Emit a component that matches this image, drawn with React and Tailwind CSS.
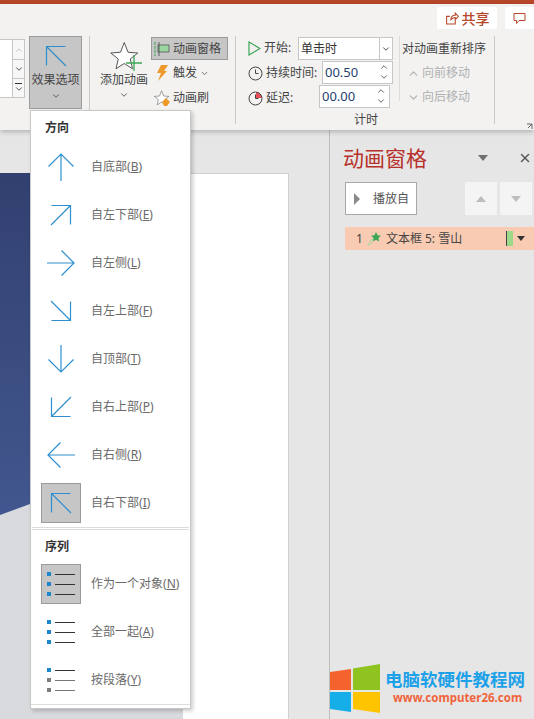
import { ChevronDown, ChevronUp, X } from "lucide-react";

const font = { fontFamily: '"Noto Sans", "Noto Sans CJK SC", sans-serif' };

const directions = [
  { angle: 0, label: "自底部", key: "B" },
  { angle: 45, label: "自左下部", key: "E" },
  { angle: 90, label: "自左侧", key: "L" },
  { angle: 135, label: "自左上部", key: "F" },
  { angle: 180, label: "自顶部", key: "T" },
  { angle: 225, label: "自右上部", key: "P" },
  { angle: 270, label: "自右侧", key: "R" },
  { angle: 315, label: "自右下部", key: "I", active: true },
];

const sequences = [
  { label: "作为一个对象", key: "N", colors: ["#1f87c9", "#1f87c9", "#1f87c9"], active: true },
  { label: "全部一起", key: "A", colors: ["#1f87c9", "#1f87c9", "#1f87c9"] },
  { label: "按段落", key: "Y", colors: ["#1f87c9", "#7d7d7d", "#7d7d7d"] },
];

// straight arrows point up, diagonal ones get corner-shaped heads
const DirArrow = ({ angle }) => {
  if (angle % 90 === 0) {
    return (
      <svg width="32" height="32" viewBox="0 0 32 32" fill="none" stroke="#2e8fd0" strokeWidth="1.2" style={{ transform: `rotate(${angle}deg)` }}>
        <path d="M16 30V3M3.500 15.500L16 3l12.500 12.500" />
      </svg>
    );
  }
  return (
    <svg width="24" height="24" viewBox="0 0 24 24" fill="none" stroke="#2e8fd0" strokeWidth="1.2" style={{ transform: `rotate(${angle - 45}deg)` }}>
      <path d="M2 22L21.500 2.500M2.500 2.500h19v19" />
    </svg>
  );
};

const ListIcon = ({ colors }) => (
  <div className="flex flex-col gap-[6px]">
    {colors.map((c, i) => (
      <div key={i} className="flex items-center gap-[4px]">
        <svg width="4" height="4"><rect width="4" height="4" fill={c} /></svg>
        <div className={i > 0 && c !== "#1f87c9" ? "w-5 h-px bg-[#777]" : "w-5 h-px bg-[#333]"} />
      </div>
    ))}
  </div>
);

const MenuRow = ({ active, label, k, children }) => (
  <div className="flex items-center h-12 pl-[10px]">
    <div className={active ? "w-10 h-10 flex items-center justify-center bg-[#c6c6c6] border border-[#9a9a9a]" : "w-10 h-10 flex items-center justify-center"}>
      {children}
    </div>
    <span className="ml-[10px] text-[12px] text-[#6a6a6a] whitespace-nowrap">
      {label}(<span className="underline">{k}</span>)
    </span>
  </div>
);

const Star = ({ size = 40 }) => (
  <svg width={size} height={size} viewBox="0 0 40 40" fill="none" stroke="#444" strokeWidth="1.200">
    <path d="M19 2l5 13 13 1-10 8 3 13-11-7-11 7 3-13L1 16l13-1z" fill="#fff" />
  </svg>
);

const Spin = () => (
  <div className="flex flex-col items-center -mt-px">
    <ChevronUp size={10} className="text-[#444]" />
    <ChevronDown size={10} className="text-[#444]" />
  </div>
);

const Sep = ({ className }) => <div className={"w-px bg-[#c9c9c9] " + className} />;

export default function App() {
  return (
    <div className="relative w-[534px] h-[719px] overflow-hidden bg-[#e6e6e6] flex flex-col" style={font}>
      <div className="h-1 bg-[#b7472a] shrink-0" />

      {/* ribbon */}
      <div className="relative z-10 h-[126px] shrink-0 bg-[#f3f2f1] shadow-[0_2px_5px_rgba(0,0,0,0.22)]">
        <div className="flex justify-end gap-2 h-[32px] pt-[3px]">
          <div className="w-[60px] h-[22px] bg-white flex items-center justify-center gap-[3px] rounded-[2px] text-[14px] font-medium text-[#b7472a]">
            <svg width="14" height="14" viewBox="0 0 12 13" fill="none" stroke="#b7472a" strokeWidth="1">
              <path d="M9 8v4H1V5h3M5 8c0-3 2-4 4-4V2l3 3-3 3V6C7 6 6 7 5 8z" />
            </svg>
            共享
          </div>
          <div className="w-[29px] h-[22px] bg-white flex items-center pl-2 rounded-l-[2px]">
            <svg width="13" height="13" viewBox="0 0 13 13" fill="none" stroke="#b7472a" strokeWidth="1">
              <path d="M1 1.500h11v7H6l-2.500 3v-3H1z" />
            </svg>
          </div>
        </div>

        <div className="flex h-[90px] text-[12px] text-[#444]">
          {/* gallery */}
          <div className="flex w-[25px] h-[59px] mt-[3px] border-y border-[#c6c6c6]">
            <div className="w-3 bg-white" />
            <div className="w-[13px] flex flex-col bg-[#f7f7f7] border-x border-[#c6c6c6]">
              <div className="h-5 flex items-center justify-center border-b border-[#c6c6c6]">
                <ChevronUp size={10} className="text-[#bbb]" />
              </div>
              <div className="h-[19px] flex items-center justify-center border-b border-[#c6c6c6]">
                <ChevronDown size={10} className="text-[#333]" />
              </div>
              <div className="flex-1 flex flex-col items-center justify-center">
                <div className="w-[7px] h-px bg-[#333]" />
                <ChevronDown size={10} className="text-[#333]" />
              </div>
            </div>
          </div>

          {/* effect options */}
          <div className="ml-1 w-[53px] h-[73px] bg-[#c6c6c6] border border-[#9a9a9a] flex flex-col items-center pt-[7px]">
            <DirArrow angle={315} />
            <span className="text-[12px] leading-[16px] mt-[4px] whitespace-nowrap">效果选项</span>
            <ChevronDown size={10} className="mt-[3px] text-[#444]" />
          </div>

          <Sep className="ml-[7px] h-[88px]" />

          {/* add animation */}
          <div className="ml-[9px] w-[50px] flex flex-col items-center pt-[5px]">
            <div className="relative h-[31px] w-[40px] pl-[6px]">
              <Star size={30} />
              <svg className="absolute right-[2px] top-[14px]" width="16" height="16" viewBox="0 0 16 16" stroke="#3aa655" strokeWidth="1.300">
                <path d="M8 0v16M0 8h16" />
              </svg>
            </div>
            <span className="mt-0 whitespace-nowrap leading-[16px]">添加动画</span>
            <ChevronDown size={10} className="mt-[2px] text-[#444]" />
          </div>

          {/* pane, trigger, painter */}
          <div className="ml-[2px] w-[77px] flex flex-col gap-[2px] pt-[1px]">
            <div className="h-[23px] bg-[#c6c6c6] border border-[#9a9a9a] flex items-center pl-[2px] gap-[3px]">
              <svg width="16" height="14" viewBox="0 0 16 14" fill="none">
                <rect x="4" y="3" width="11" height="7" fill="#9ad8a0" stroke="#555" strokeWidth="0.800" />
                <path d="M1 0v14" stroke="#3aa655" strokeDasharray="3 1" />
                <path d="M5 0v14" stroke="#444" strokeWidth="0.800" />
              </svg>
              <span className="whitespace-nowrap">动画窗格</span>
            </div>
            <div className="h-[22px] flex items-center pl-[5px] gap-[3px]">
              <svg width="12" height="16" viewBox="0 0 12 16" fill="#ed9a2d">
                <path d="M5 0h7L8 6h3L2 16l3-8H1z" />
              </svg>
              <span className="whitespace-nowrap ml-[2px]">触发</span>
              <ChevronDown size={9} className="text-[#444]" />
            </div>
            <div className="h-[23px] flex items-center pl-[3px] gap-[3px]">
              <div className="relative">
                <Star size={16} />
                <svg className="absolute right-0 bottom-0" width="8" height="8"><path d="M0 4L4 0l4 4-3 4H2z" fill="#ed9a2d" /></svg>
              </div>
              <span className="whitespace-nowrap">动画刷</span>
            </div>
          </div>

          <Sep className="ml-[7px] h-[88px]" />

          {/* timing */}
          <div className="ml-[12px] w-[145px] flex flex-col">
            <div className="flex items-start">
              <div className="flex flex-col gap-[1px] w-[74px]">
                <div className="h-6 flex items-center gap-[3px] whitespace-nowrap">
                  <svg width="13" height="15" viewBox="0 0 13 15" fill="none" stroke="#3aa655" strokeWidth="1.200"><path d="M1 1l11 6.500L1 14z" /></svg>
                  开始:
                </div>
                <div className="h-6 flex items-center gap-[3px] whitespace-nowrap">
                  <svg width="15" height="15" viewBox="0 0 15 15" fill="none" stroke="#444"><circle cx="7.500" cy="7.500" r="6.500" /><path d="M7.500 3.500v4h3" /></svg>
                  持续时间:
                </div>
                <div className="h-6 flex items-center gap-[3px] whitespace-nowrap">
                  <svg width="15" height="15" viewBox="0 0 15 15" fill="none" stroke="#444"><path d="M8 1a6.500 6.500 0 0 1 6 6H8z" fill="#e8505a" stroke="none" /><circle cx="7.500" cy="7.500" r="6.500" /><path d="M7.500 3.500v4h3" /></svg>
                  延迟:
                </div>
              </div>
              <div className="flex flex-col gap-px -ml-[25px] items-end w-[96px] pt-[1px]">
                <div className="w-[95px] h-[23px] bg-white border border-[#c6c6c6] flex items-center justify-between pl-[2px] text-[#333]">
                  单击时
                  <div className="w-[13px] h-full border-l border-[#c6c6c6] flex items-center justify-center">
                    <ChevronDown size={10} className="text-[#333]" />
                  </div>
                </div>
                <div className="w-[71px] h-[23px] bg-white border border-[#c6c6c6] flex items-center justify-between pl-[2px] pr-[3px] text-[13px] text-[#1f3f6f]">
                  00.50
                  <Spin />
                </div>
                <div className="w-[71px] h-[23px] bg-white border border-[#c6c6c6] flex items-center justify-between pl-[2px] pr-[3px] text-[13px] text-[#1f3f6f] mr-[3px]">
                  00.00
                  <Spin />
                </div>
              </div>
            </div>
            <div className="text-center pl-[91px] mt-[2px] leading-[16px]">计时</div>
          </div>

          <Sep className="ml-[6px] h-[65px] bg-[#dcdcdc]" />

          {/* reorder */}
          <div className="ml-[2px] w-[85px] flex flex-col pt-[1px]">
            <div className="h-6 flex items-center whitespace-nowrap">对动画重新排序</div>
            <div className="h-6 flex items-center gap-[2px] pl-[5px] text-[#b0b0b0] whitespace-nowrap">
              <ChevronUp size={13} />向前移动
            </div>
            <div className="h-6 flex items-center gap-[2px] pl-[5px] text-[#b0b0b0] whitespace-nowrap">
              <ChevronDown size={13} />向后移动
            </div>
          </div>

          <Sep className="ml-[7px] h-[88px]" />
        </div>
        <svg className="absolute right-[1px] bottom-[1px]" width="6" height="6" fill="none" stroke="#666"><path d="M0 1h5v5M5 1L1 5" /></svg>
      </div>

      {/* work area */}
      <div className="flex-1 flex min-h-0">
        <div className="w-[329px] shrink-0 pt-[43px] border-r-0">
          <div className="flex h-full w-[289px]">
            <div className="w-[183px] h-full relative bg-[linear-gradient(180deg,#31406f_0%,#3f5288_50%,#4a66a6_100%)]">
              <svg className="absolute inset-0" width="183" height="546" viewBox="0 0 183 546">
                <path d="M0 342L60 320L183 290V546H0z" fill="#d9dadd" />
              </svg>
            </div>
            <div className="flex-1 bg-white border-t border-r border-[#d0d0d0]" />
          </div>
        </div>

        {/* animation pane */}
        <div className="flex-1 border-l border-[#bdbdbd] pl-[15px] pt-[13px]">
          <div className="flex items-center h-[30px] -ml-[2px]">
            <span className="text-[21px] leading-[30px] text-[#b7312a] whitespace-nowrap">动画窗格</span>
            <svg className="ml-[51px]" width="10" height="6"><path d="M0 0h10L5 6z" fill="#707070" /></svg>
            <X size={14} strokeWidth={2.400} className="ml-[30px] text-[#555]" />
          </div>
          <div className="flex mt-[9px] h-[33px]">
            <div className="w-[72px] bg-white border border-[#a8a8a8] flex items-center pl-2 text-[12px] text-[#555]">
              <svg width="6" height="12"><path d="M0 0l6 6-6 6z" fill="#8a8a8a" /></svg>
              <span className="ml-[13px]">播放自</span>
            </div>
            <div className="ml-[48px] w-8 bg-[#f4f4f4] flex items-center justify-center">
              <svg width="10" height="6"><path d="M5 0l5 6H0z" fill="#bdbdbd" /></svg>
            </div>
            <div className="ml-[3px] w-8 bg-[#f4f4f4] flex items-center justify-center">
              <svg width="10" height="6"><path d="M0 0h10L5 6z" fill="#bdbdbd" /></svg>
            </div>
          </div>
          <div className="flex items-center mt-[12px] h-[23px] bg-[#f8cbb2] text-[12px] text-[#444] pl-[11px]">
            <span>1</span>
            <svg className="ml-[4px]" width="14" height="14" viewBox="0 0 14 14">
              <path d="M9 0l1.500 3.300 3.500.4-2.600 2.400.7 3.500L9 7.800 5.900 9.600l.7-3.500L4 3.700l3.500-.4z" fill="#3aa655" />
              <path d="M3 9l3-2M1 13l4-3" stroke="#a8d8a8" strokeWidth="1.500" />
            </svg>
            <span className="ml-[5px] whitespace-nowrap">文本框 5: 雪山</span>
            <div className="ml-[44px] w-[7px] h-[15px] bg-[#9ed98a] border-l border-[#444]" />
            <svg className="ml-[4px]" width="8" height="5"><path d="M0 0h8L4 5z" fill="#333" /></svg>
          </div>
        </div>
      </div>

      {/* effect options dropdown */}
      <div className="absolute z-20 left-[30px] top-[110px] w-[161px] h-[599px] bg-white border border-[#c8c8c8] shadow-[2px_2px_4px_rgba(0,0,0,0.2)]">
        <div className="h-[32px] flex items-center pl-[14px] pt-[2px] text-[12px] font-bold text-[#333]">方向</div>
        {directions.map((d) => (
          <MenuRow key={d.key} active={d.active} label={d.label} k={d.key}>
            <DirArrow angle={d.angle} />
          </MenuRow>
        ))}
        <div className="mx-[1px] h-[3px] border-y border-[#dcdcdc]" />
        <div className="h-[30px] flex items-center pl-[14px] pt-[3px] text-[12px] font-bold text-[#333]">序列</div>
        {sequences.map((s) => (
          <MenuRow key={s.key} active={s.active} label={s.label} k={s.key}>
            <ListIcon colors={s.colors} />
          </MenuRow>
        ))}
        <div className="h-px bg-[#dcdcdc]" />
      </div>

      {/* watermark */}
      <div className="absolute z-20 left-[330px] top-[662px] flex">
        <svg width="50" height="52" viewBox="0 0 50 52">
          <path d="M0 10l21-3v21H0z" fill="#f4622e" />
          <path d="M23 6.500L50 2v26H23z" fill="#8fc31f" />
          <path d="M0 30h21v20L0 47z" fill="#15aee8" />
          <path d="M23 30h27v21l-27-4z" fill="#ffc400" />
        </svg>
        <div className="ml-[5px] flex flex-col">
          <span className="mt-[7px] text-[17.500px] leading-[20px] font-bold text-[#1da1e8] whitespace-nowrap">电脑软硬件教程网</span>
          <span className="ml-[8px] mt-[1px] text-[11.500px] leading-[15px] font-bold text-[#f0643c] whitespace-nowrap">www.computer26.com</span>
        </div>
      </div>
    </div>
  );
}
